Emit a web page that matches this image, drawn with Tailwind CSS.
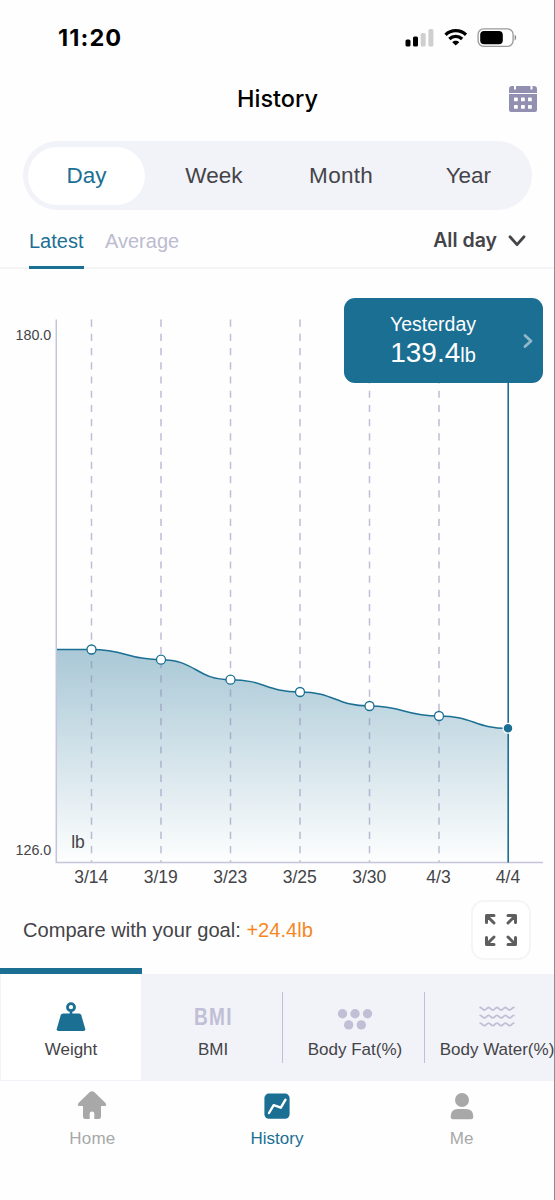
<!DOCTYPE html>
<html lang="en">
<head>
  <meta charset="UTF-8" />
  <meta name="viewport" content="width=device-width, initial-scale=1.0" />
  <title>History</title>
  <script src="https://cdn.jsdelivr.net/npm/@tailwindcss/browser@4"></script>
</head>
<body class="bg-white">
  <div class="w-[555px] h-[1200px] overflow-hidden flex flex-col border-r border-[#8e8e8e] bg-[#fefefe] font-['Liberation_Sans',Arial,sans-serif] text-[#444448]">

    <!-- Status bar -->
    <div class="h-[74px] shrink-0 flex items-center justify-between pl-[58px] pr-[37px]">
      <span class="mt-[2px] font-['Inter',sans-serif] font-bold text-[23.5px] tracking-[1.1px] leading-none text-black">11:20</span>
      <div class="flex items-center gap-[10px]">
        <svg width="29" height="19" viewBox="0 0 29 19">
          <rect x="0.5" y="11.5" width="5" height="7" rx="1.5" fill="#000" />
          <rect x="8" y="8.5" width="5" height="10" rx="1.5" fill="#000" />
          <rect x="15.7" y="5" width="5" height="13.5" rx="1.5" fill="#cfcfcf" />
          <rect x="23.4" y="1" width="5" height="17.5" rx="1.5" fill="#cfcfcf" />
        </svg>
        <svg width="23.5" height="18" viewBox="0 0 25 19" fill="none" stroke="#000" stroke-width="3.5">
          <path d="M1.6 7.2C7.6 1.3 17.4 1.3 23.4 7.2" />
          <path d="M5.7 11.7C9.6 8 15.4 8 19.3 11.7" />
          <path d="M8.8 15C10.8 13 14.2 13 16.2 15L12.5 18.6Z" fill="#000" stroke="none" />
        </svg>
        <svg width="40" height="19" viewBox="0 0 40 19">
          <rect x="1.1" y="0.9" width="35" height="17.4" rx="5.5" fill="#fff" stroke="#999" stroke-width="1.3" />
          <rect x="3.2" y="3" width="22.6" height="13.2" rx="4" fill="#000" />
          <path d="M37.6 6.8C39.7 7.6 39.7 11.6 37.6 12.4Z" fill="#8a8a8a" />
        </svg>
      </div>
    </div>

    <!-- Header -->
    <div class="h-[50px] shrink-0 grid grid-cols-[1fr_auto_1fr] items-center pr-[16px]">
      <span></span>
      <h1 class="pl-[17px] font-['Inter',sans-serif] font-medium text-[23.5px] leading-none text-black">History</h1>
      <svg class="justify-self-end" width="30" height="28" viewBox="0 0 30 28">
        <path d="M1 8V4a3 3 0 0 1 3-3h2v3.5h2V1h14.500v3.500h2V1h1.500a3 3 0 0 1 3 3v4Z" fill="#9290b1" />
        <path d="M1 9h28v16a2 2 0 0 1-2 2H3a2 2 0 0 1-2-2Z" fill="#9290b1" />
        <g fill="#fff">
          <rect x="6" y="12.500" width="3.800" height="3.800" rx=".6" />
          <rect x="13" y="12.500" width="3.800" height="3.800" rx=".6" />
          <rect x="20" y="12.500" width="3.800" height="3.800" rx=".6" />
          <rect x="6" y="20" width="3.800" height="3.800" rx=".6" />
          <rect x="13" y="20" width="3.800" height="3.800" rx=".6" />
          <rect x="20" y="20" width="3.800" height="3.800" rx=".6" />
        </g>
      </svg>
    </div>

    <!-- Period selector -->
    <div class="mt-[17px] ml-[23px] w-[509px] h-[69px] shrink-0 rounded-full bg-[#f2f3f8] grid grid-cols-4 items-center justify-items-center text-[22.5px]">
      <div class="w-[117px] h-[58px] pt-px rounded-full bg-white flex items-center justify-center text-[#1b6f93]">Day</div>
      <div class="pt-px">Week</div>
      <div class="pt-px tracking-[0.3px]">Month</div>
      <div class="pt-px">Year</div>
    </div>

    <!-- Latest / Average -->
    <div class="mt-[5px] h-[54px] shrink-0 flex justify-between border-b-2 border-[#f4f4f6] pl-[29px] pr-[28px] text-[20px]">
      <div class="flex gap-[21px]">
        <div class="h-[54px] w-[55px] flex items-center border-b-3 border-[#1b6f93] text-[#1b6f93] whitespace-nowrap">Latest</div>
        <div class="h-[51px] flex items-center text-[#bcbbd0]">Average</div>
      </div>
      <div class="h-[51px] flex items-center gap-[11px] font-['Inter',sans-serif] font-semibold text-[19.500px]">
        All day
        <svg width="18" height="12" viewBox="0 0 18 12" fill="none" stroke="#444448" stroke-width="2.800" stroke-linecap="round" stroke-linejoin="round">
          <path d="M2 1.800L9 9.600L16 1.800" />
        </svg>
      </div>
    </div>

    <!-- Chart -->
    <div class="relative h-[627px] shrink-0">
      <svg class="block" width="554" height="627" viewBox="0 269 554 627">
        <defs>
          <linearGradient id="area" x1="0" y1="649" x2="0" y2="862" gradientUnits="userSpaceOnUse">
            <stop offset="0" stop-color="#a9c8d6" />
            <stop offset="1" stop-color="#fdfefe" />
          </linearGradient>
        </defs>
        <path fill="url(#area)" d="M57 649.500H91.500C126 649.500 126 659.700 161 659.700S196 679.700 230.500 679.700S265 692 300 692S335 706 369.500 706S404 716 439 716S474 728.500 508 728.500V862H57Z" />
        <g stroke="#8a88b4" stroke-opacity=".55" stroke-width="1.500" stroke-dasharray="7.200 7.030">
          <path d="M91.500 319.500V862" />
          <path d="M161 319.500V862" />
          <path d="M230.500 319.500V862" />
          <path d="M300 319.500V862" />
          <path d="M369.500 319.500V862" />
          <path d="M439 319.500V862" />
        </g>
        <path d="M56.300 319.500V862.600H543" fill="none" stroke="#c5c4d9" stroke-width="1.500" />
        <path d="M508.200 383V862.500" stroke="#1b6f93" stroke-width="1.600" />
        <path fill="none" stroke="#1b6f93" stroke-width="1.500" d="M57 649.500H91.500C126 649.500 126 659.700 161 659.700S196 679.700 230.500 679.700S265 692 300 692S335 706 369.500 706S404 716 439 716S474 728.500 508 728.500" />
        <g fill="#fff" stroke="#1b6f93" stroke-width="1.300">
          <circle cx="91.500" cy="649.500" r="4.500" />
          <circle cx="161" cy="659.700" r="4.500" />
          <circle cx="230.500" cy="679.700" r="4.500" />
          <circle cx="300" cy="692" r="4.500" />
          <circle cx="369.500" cy="706" r="4.500" />
          <circle cx="439" cy="716" r="4.500" />
        </g>
        <circle cx="508" cy="728.300" r="4.900" fill="#1b6f93" stroke="#fff" stroke-width="1.300" />
        <g fill="#444448" font-size="14.300">
          <text x="15.500" y="339.500">180.0</text>
          <text x="15.500" y="855">126.0</text>
        </g>
        <g fill="#444448" font-size="17.500" text-anchor="middle">
          <text x="78" y="848">lb</text>
          <text x="91.200" y="883.300">3/14</text>
          <text x="160.700" y="883.300">3/19</text>
          <text x="230.300" y="883.300">3/23</text>
          <text x="299.700" y="883.300">3/25</text>
          <text x="369.200" y="883.300">3/30</text>
          <text x="438.500" y="883.300">4/3</text>
          <text x="508" y="883.300">4/4</text>
        </g>
      </svg>

      <!-- Selected value -->
      <div class="absolute left-[344px] top-[29px] w-[199px] h-[85px] rounded-[11px] bg-[#1b6f93] text-white flex items-center justify-end pr-[10px]">
        <div class="w-[88px] mr-[46px] pt-[2px] flex flex-col items-center whitespace-nowrap">
          <span class="text-[19.500px] leading-[24px]">Yesterday</span>
          <span class="text-[28px] leading-[33px]">139.4<span class="text-[20px]">lb</span></span>
        </div>
        <svg width="10" height="16" viewBox="0 0 10 16" fill="none" stroke="#8fb9cb" stroke-width="2.800" stroke-linecap="round" stroke-linejoin="round">
          <path d="M2 2.500L8 8L2 13.500" />
        </svg>
      </div>
    </div>

    <!-- Goal -->
    <div class="h-[72px] shrink-0 flex items-start justify-between pl-[23px] pr-[23px] pt-[4px]">
      <p class="mt-[16px] text-[20.100px] leading-[28px]">Compare with your goal: <span class="text-[#f5871f]">+24.4lb</span></p>
      <div class="size-[60px] rounded-[13px] border-2 border-[#f5f5f5] bg-white flex items-center justify-center">
        <svg width="34" height="34" viewBox="0 0 34 34" fill="none" stroke="#5e5e5e" stroke-width="3" stroke-linecap="round" stroke-linejoin="round">
          <path d="M2.500 9.500V2.500H10M3.500 3.500L10 10" />
          <path d="M24 2.500H31.500V9.500M30.500 3.500L24 10" />
          <path d="M2.500 24.500V31.500H10M3.500 30.500L10 24" />
          <path d="M24 31.500H31.500V24.500M30.500 30.500L24 24" />
        </svg>
      </div>
    </div>

    <!-- Metrics -->
    <div class="h-[113px] shrink-0 flex text-[17px] leading-[20px]">
      <div class="w-[142px] shrink-0 border-t-6 border-[#1b6f93] bg-[#f2f3f8] px-px pb-px">
        <div class="h-full bg-white flex flex-col items-center pt-[27px]">
          <svg width="30" height="31" viewBox="0 0 30 31">
            <circle cx="15" cy="6.200" r="3.500" fill="none" stroke="#1b6f93" stroke-width="2.800" />
            <path d="M13.700 9h2.600v4h-2.600Z" fill="#1b6f93" />
            <path d="M7 12.500H23Q24.800 12.500 25.300 14.200L29.200 27.700Q29.800 30 27.600 30H2.400Q.2 30 .8 27.700L4.700 14.200Q5.200 12.500 7 12.500Z" fill="#1b6f93" />
          </svg>
          <span class="mt-[8px]">Weight</span>
        </div>
      </div>
      <div class="mt-[6px] flex-1 flex bg-[#f2f3f8] overflow-hidden">
        <div class="w-[142px] shrink-0 flex flex-col items-center pt-[30px]">
          <span class="h-[26px] flex items-center text-[23px] font-bold tracking-[1.500px] text-[#c0bfd5]"><span class="scale-x-[0.830]">BMI</span></span>
          <span class="mt-[10px]">BMI</span>
        </div>
        <div class="w-px shrink-0 h-[71px] mt-[18px] -ml-[2px] mr-px bg-[#c0bfd5]"></div>
        <div class="w-[142px] shrink-0 flex flex-col items-center pt-[34px]">
          <svg width="36" height="22" viewBox="0 0 36 22" fill="#c0bfd5">
            <circle cx="5.500" cy="5.700" r="4.700" />
            <circle cx="18" cy="5.700" r="4.700" />
            <circle cx="30.500" cy="5.700" r="4.700" />
            <circle cx="11.700" cy="16.900" r="4.700" />
            <circle cx="24.300" cy="16.900" r="4.700" />
          </svg>
          <span class="mt-[10px] whitespace-nowrap">Body Fat(%)</span>
        </div>
        <div class="w-px shrink-0 h-[71px] mt-[18px] -ml-[2px] mr-px bg-[#c0bfd5]"></div>
        <div class="w-[142px] shrink-0 flex flex-col items-center pt-[32px]">
          <svg width="36" height="22" viewBox="0 0 36 22" fill="none" stroke="#c0bfd5" stroke-width="1.800" stroke-linecap="round">
            <path d="M1.200 1.500C3 1.500 3.500 4 5.400 4S7.700 1.500 9.600 1.500S11.900 4 13.800 4S16.100 1.500 18 1.500S20.300 4 22.200 4S24.500 1.500 26.400 1.500S28.700 4 30.600 4S33 1.500 34.800 1.500" />
            <path d="M1.200 9.300C3 9.300 3.500 11.800 5.400 11.800S7.700 9.300 9.600 9.300S11.900 11.800 13.800 11.800S16.100 9.300 18 9.300S20.300 11.800 22.200 11.800S24.500 9.300 26.400 9.300S28.700 11.800 30.600 11.800S33 9.300 34.800 9.300" />
            <path d="M1.200 17.100C3 17.100 3.500 19.600 5.400 19.600S7.700 17.100 9.600 17.100S11.900 19.600 13.800 19.600S16.100 17.100 18 17.100S20.300 19.600 22.200 19.600S24.500 17.100 26.400 17.100S28.700 19.600 30.600 19.600S33 17.100 34.800 17.100" />
          </svg>
          <span class="mt-[12px] whitespace-nowrap">Body Water(%)</span>
        </div>
      </div>
    </div>

    <!-- Tab bar -->
    <div class="h-[120px] shrink-0 grid grid-cols-3 pt-[10px] text-[17px] leading-[20px] text-[#a8a8a8]">
      <div class="flex flex-col items-center">
        <svg width="30" height="29" viewBox="0 0 30 29" fill="#a8a8a8">
          <path d="M12.800 1Q15 -.6 17.200 1L28.500 12Q30.300 15 27.500 15H24V25.500Q24 28 21.500 28H17.300V22.500Q17.300 20.500 15 20.500T12.700 22.500V28H8.500Q6 28 6 25.500V15H2.500Q-.3 15 1.500 12Z" />
        </svg>
        <span class="mt-[9px] tracking-[0.200px]">Home</span>
      </div>
      <div class="flex flex-col items-center text-[#1b6f93]">
        <svg width="26" height="29" viewBox="0 0 26 29">
          <rect x="0.400" y="2.600" width="25.200" height="25.200" rx="4.500" fill="#1b6f93" />
          <path d="M5 22L9.700 14.200L16.800 16.700L21.500 8.700" fill="none" stroke="#fff" stroke-width="2.400" stroke-linecap="round" stroke-linejoin="round" />
        </svg>
        <span class="mt-[9px]">History</span>
      </div>
      <div class="flex flex-col items-center">
        <svg width="24" height="29" viewBox="0 0 24 29" fill="#a8a8a8">
          <circle cx="12" cy="9" r="7" />
          <path d="M0.700 26V25.500Q.7 18 8 18H16Q23.300 18 23.300 25.500V26Q23.300 28.300 21 28.300H3Q.7 28.300 .7 26Z" />
        </svg>
        <span class="mt-[9px]">Me</span>
      </div>
    </div>
  </div>
</body>
</html>
